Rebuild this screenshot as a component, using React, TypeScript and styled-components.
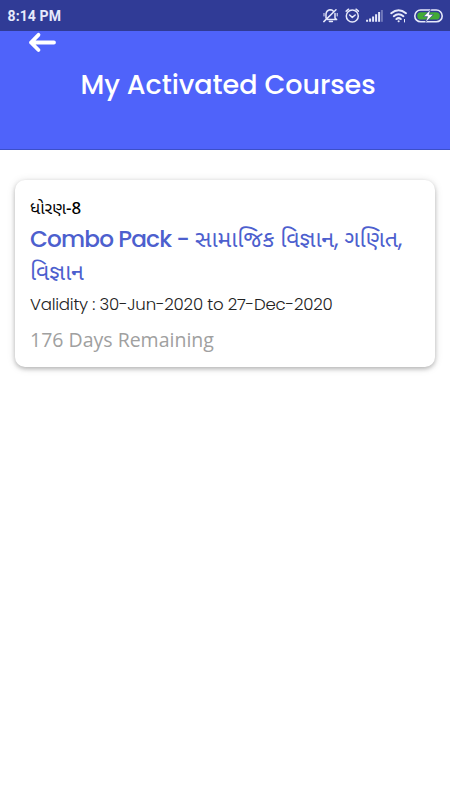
import React from "react";
import styled, { createGlobalStyle } from "styled-components";

const GlobalStyle = createGlobalStyle`
  * { box-sizing: border-box; }
  body { margin: 0; background: #fff; font-family: Poppins, Inter, "Noto Sans Gujarati", "Noto Sans", sans-serif; }
`;

const Screen = styled.div`
  display: flex;
  flex-direction: column;
  width: 450px;
  height: 800px;
  overflow: hidden;
  background: #fff;
`;

const StatusBar = styled.div`
  display: flex;
  flex: none;
  align-items: center;
  justify-content: space-between;
  height: 31px;
  padding: 0 6px 0 7.5px;
  background: #303b96;
  color: #e6e9fb;
`;

const Clock = styled.span`
  font: 700 14px/31px Roboto, sans-serif;
  letter-spacing: 0.1px;
  padding-top: 1px;
`;

const StatusIcons = styled.svg`
  display: block;
  width: 124px;
  height: 31px;
`;

const Header = styled.header`
  display: flex;
  flex: none;
  flex-direction: column;
  height: 119px;
  background: #4f63fa;
  border-bottom: 1px solid #3c4fc8;
`;

const BackButton = styled.button`
  display: block;
  width: 30px;
  height: 24px;
  margin-left: 28px;
  padding: 0;
  border: 0;
  background: none;
`;

const Title = styled.h1`
  margin: 12px 0 0 6px;
  color: #fff;
  font-size: 27px;
  line-height: 36px;
  font-weight: 500;
  letter-spacing: -0.05px;
  text-align: center;
  white-space: nowrap;
`;

const Card = styled.article`
  flex: none;
  height: 187px;
  margin: 30px 15px 0;
  padding: 15px;
  border-radius: 10px;
  background: #fff;
  box-shadow: 0 2px 4px rgba(0, 0, 0, 0.22), 0 1px 9px rgba(0, 0, 0, 0.13);
  white-space: nowrap;
`;

const Line = styled.div<{ $h: number; $size: number; $color: string; $track?: number; $weight?: number; $family?: string }>`
  height: ${(p) => p.$h}px;
  line-height: ${(p) => p.$h}px;
  font-size: ${(p) => p.$size}px;
  color: ${(p) => p.$color};
  letter-spacing: ${(p) => p.$track ?? 0}px;
  font-weight: ${(p) => p.$weight ?? 400};
  ${(p) => p.$family && `font-family: ${p.$family};`}
`;

const Gujarati = styled.span<{ $track?: number }>`
  font-weight: 400;
  letter-spacing: ${(p) => p.$track ?? 0}px;
`;

export default function App() {
  return (
    <>
      <GlobalStyle />
      <Screen>
        <StatusBar>
          <Clock>8:14 PM</Clock>
          <StatusIcons viewBox="320 0 124 31" fill="none" stroke="#e6e9fb" strokeWidth="1.5" strokeLinecap="round" strokeLinejoin="round">
            <path d="M326 18v-4q.4-3.6 4-4.2 2 0 3.2 1.2M335 13.5V18l1.6 1.6h-9M329.4 21.4h3M323.8 21.6 336 9.8" />
            <path d="M324 13.4v2.6M337.2 13.4v2.6" strokeWidth="1" />
            <circle cx="352.3" cy="16" r="6" />
            <path d="m349.6 15 2.7 2.4 2.9-2.4M346.2 11.2l2.4-2M358.4 11.2l-2.4-2" />
            <g strokeWidth="2" strokeLinecap="butt">
              <path d="M367.1 21.8v-2M370.1 21.8v-3.4M373.1 21.8v-5.4M376.1 21.8v-7.6" />
              <path d="M379.1 21.8V12" />
              <path d="M381.9 21.8V10" opacity=".35" />
            </g>
            <g strokeWidth="2">
              <path d="M391.2 13.2q7.4-6 14.8 0M393.8 16.2q4.8-4 9.6 0M396.4 19q2.2-1.8 4.4 0" />
              <path d="m398.6 21.2.1.1" />
              <path d="M404.5 19.4v2.6" strokeWidth="1" />
            </g>
            <rect x="414.8" y="10" width="27.4" height="11.8" rx="5.9" strokeWidth="1.6" />
            <rect x="417.2" y="12.3" width="22.6" height="7.2" rx="3.6" fill="#42aa36" stroke="none" />
            <path d="m430.6 9.6-7 7h4l-2.2 5.8 8-7.8h-4.2l1.4-5Z" fill="#fff" stroke="#303b96" strokeWidth=".6" />
          </StatusIcons>
        </StatusBar>
        <Header>
          <BackButton aria-label="Back">
            <svg width="30" height="24" viewBox="0 0 30 24" fill="none" stroke="#fff" strokeWidth="3.8" strokeLinecap="round" strokeLinejoin="round">
              <path d="M26 11.5H3M10.5 3.8 3 11.5l7.5 7.5" />
            </svg>
          </BackButton>
          <Title>My Activated Courses</Title>
        </Header>
        <Card>
          <Line $h={25} $size={16.9} $color="#000" $weight={500} $family={'"Noto Sans", "Noto Sans Gujarati", sans-serif'}><Gujarati>ધોરણ</Gujarati>-8</Line>
          <Line $h={39} $size={23.2} $color="#4d5fce" $weight={500} $track={-0.85}>Combo Pack -<Gujarati $track={-0.14}> સામાજિક વિજ્ઞાન, ગણિત,</Gujarati></Line>
          <Line $h={27} $size={23} $color="#4d5fce"><Gujarati>વિજ્ઞાન</Gujarati></Line>
          <Line $h={37} $size={16.6} $color="#222" $weight={300} $track={-0.22}>Validity : 30-Jun-2020 to 27-Dec-2020</Line>
          <Line $h={34} $size={19.5} $color="#a0a0a0" $family={'"Open Sans", sans-serif'}>176 Days Remaining</Line>
        </Card>
      </Screen>
    </>
  );
}
